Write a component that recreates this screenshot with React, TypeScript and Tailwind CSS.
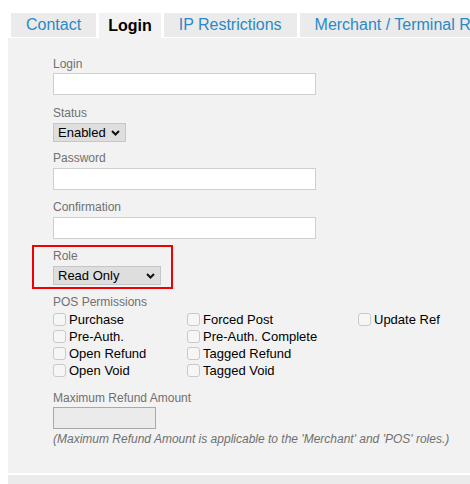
import React from 'react';

const font = { fontFamily: '"Liberation Sans", Arial, sans-serif' };

function Label({ children }: { children: React.ReactNode }) {
  return <div className="text-[12px] leading-[14px] text-[#707070]">{children}</div>;
}

function TextInput({ className = '' }: { className?: string }) {
  return <div className={`h-[22px] w-[263px] border border-[#cfcfcf] bg-white ${className}`} />;
}

function Chevron() {
  return (
    <svg width="9" height="6" viewBox="0 0 9 6" className="shrink-0">
      <path d="M1 1l3.5 3.5L8 1" fill="none" stroke="#111" strokeWidth="2" />
    </svg>
  );
}

function Select({ value, width }: { value: string; width: string }) {
  return (
    <div className={`flex h-[19px] ${width} items-center justify-between border border-[#c6c6c6] bg-[#dedede] pl-[4px] pr-[5px]`}>
      <span className="text-[13px] leading-none text-black">{value}</span>
      <Chevron />
    </div>
  );
}

function Check({ label }: { label: string }) {
  return (
    <div className="flex h-[17px] items-center gap-[3px]">
      <span className="h-[13px] w-[13px] rounded-[3px] border border-[#c9c9c9] bg-[#f6f6f6]" />
      <span className="text-[13px] leading-none text-black">{label}</span>
    </div>
  );
}

export default function App() {
  const tabs = [
    { label: 'Contact', cls: 'px-[15px]' },
    { label: 'Login', cls: 'px-[9px]', active: true },
    { label: 'IP Restrictions', cls: 'px-[15px]' },
    { label: 'Merchant / Terminal Restrictions', cls: 'px-[15px]' },
  ];

  return (
    <div className="h-[484px] w-[470px] overflow-hidden bg-white" style={font}>
      {/* Tabs */}
      <div className="ml-[11px] mt-[13px] flex gap-[3px] whitespace-nowrap">
        {tabs.map((t) =>
          t.active ? (
            <div key={t.label} className={`h-[25px] bg-[#f2f2f2] ${t.cls} pt-[3px] text-[16px] font-bold leading-[20px] text-black`}>
              {t.label}
            </div>
          ) : (
            <div key={t.label} className={`mb-[1px] h-[24px] bg-[#ebebeb] ${t.cls} pt-[2px] text-[16px] leading-[20px] text-[#2a89c6]`}>
              {t.label}
            </div>
          )
        )}
      </div>

      {/* Panel */}
      <div className="ml-[8px] h-[435px] bg-[#f2f2f2] pl-[45px] pt-[19px]">
        <Label>Login</Label>
        <TextInput className="mt-[2px]" />

        <div className="mt-[11px]">
          <Label>Status</Label>
        </div>
        <div className="mt-[3px]">
          <Select value="Enabled" width="w-[73px]" />
        </div>

        <div className="mt-[9px]">
          <Label>Password</Label>
        </div>
        <TextInput className="mt-[3px]" />

        <div className="mt-[10px]">
          <Label>Confirmation</Label>
        </div>
        <TextInput className="mt-[3px]" />

        <div className="-ml-[21px] mt-[6px] h-[44px] w-[141px] border-2 border-[#f00000] pl-[19px] pt-[2px]">
          <Label>Role</Label>
          <div className="mt-[3px]">
            <Select value="Read Only" width="w-[108px]" />
          </div>
        </div>

        <div className="mt-[6px]">
          <Label>POS Permissions</Label>
        </div>
        <div className="mt-[2px] grid grid-cols-[134px_171px_auto]">
          <div className="flex flex-col">
            <Check label="Purchase" />
            <Check label="Pre-Auth." />
            <Check label="Open Refund" />
            <Check label="Open Void" />
          </div>
          <div className="flex flex-col">
            <Check label="Forced Post" />
            <Check label="Pre-Auth. Complete" />
            <Check label="Tagged Refund" />
            <Check label="Tagged Void" />
          </div>
          <div className="flex flex-col">
            <Check label="Update Ref" />
          </div>
        </div>

        <div className="mt-[12px]">
          <Label>Maximum Refund Amount</Label>
        </div>
        <div className="mt-[2px] h-[22px] w-[103px] border border-[#a9a9a9] bg-[#ebebeb]" />
        <div className="mt-[3px] whitespace-nowrap text-[12px] italic leading-[14px] text-[#707070]">
          (Maximum Refund Amount is applicable to the 'Merchant' and 'POS' roles.)
        </div>
      </div>

      <div className="ml-[8px] mt-[2px] h-[12px] bg-[#ebebeb]" />
    </div>
  );
}
